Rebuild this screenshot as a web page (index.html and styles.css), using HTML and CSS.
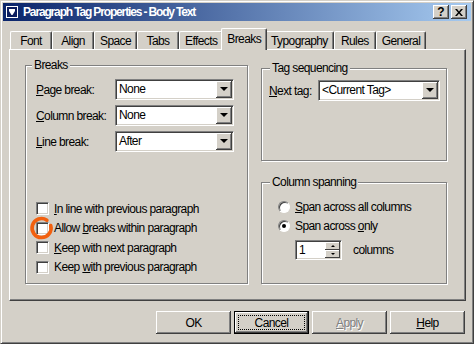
FILE: index.html
```html
<!DOCTYPE html>
<html lang="en">
<head>
    <meta charset="UTF-8">
    <meta name="viewport" content="width=device-width, initial-scale=1.0">
    <title>Paragraph Tag Properties - Body Text</title>
    <link rel="stylesheet" href="styles.css">
</head>
<body>
    <div class="window">
        <div class="titlebar">
            <svg class="app-icon" width="12" height="12" viewBox="0 0 12 12">
                <rect x="0.5" y="0.5" width="11" height="11" fill="#0c1d5e" stroke="#fff"/>
                <polygon points="3,3 9,3 9,5 6.5,9 5.5,9 3,5" fill="#fff"/>
            </svg>
            <span class="title">Paragraph Tag Properties - Body Text</span>
            <div class="caption-btns">
                <span class="cap-btn">?</span>
                <span class="cap-btn">
                    <svg width="8" height="7" viewBox="0 0 8 7">
                        <path d="M0 0h2l2 2.5L6 0h2L5 3.5 8 7H6L4 4.5 2 7H0l3-3.5z" fill="#000"/>
                    </svg>
                </span>
            </div>
        </div>

        <div class="dialog">
            <div class="tabs">
                <div class="tab">Font</div>
                <div class="tab">Align</div>
                <div class="tab">Space</div>
                <div class="tab">Tabs</div>
                <div class="tab">Effects</div>
                <div class="tab active">Breaks</div>
                <div class="tab">Typography</div>
                <div class="tab">Rules</div>
                <div class="tab">General</div>
            </div>

            <div class="panel">
                <fieldset class="group breaks">
                    <legend>Breaks</legend>
                    <div class="field-row">
                        <label><u>P</u>age break:</label>
                        <div class="select"><span class="value">None</span><span class="drop-btn"></span></div>
                    </div>
                    <div class="field-row">
                        <label><u>C</u>olumn break:</label>
                        <div class="select"><span class="value">None</span><span class="drop-btn"></span></div>
                    </div>
                    <div class="field-row">
                        <label><u>L</u>ine break:</label>
                        <div class="select"><span class="value">After</span><span class="drop-btn"></span></div>
                    </div>

                    <div class="checks">
                        <div class="check"><span class="box"></span><span><u>I</u>n line with previous paragraph</span></div>
                        <div class="check"><span class="box"></span><span>Allow <u>b</u>reaks within paragraph</span></div>
                        <div class="check"><span class="box"></span><span><u>K</u>eep with next paragraph</span></div>
                        <div class="check"><span class="box"></span><span>Keep <u>w</u>ith previous paragraph</span></div>
                    </div>
                </fieldset>

                <div class="right-col">
                    <fieldset class="group tagseq">
                        <legend>Tag sequencing</legend>
                        <div class="field-row">
                            <label class="short"><u>N</u>ext tag:</label>
                            <div class="select wide"><span class="value">&lt;Current Tag&gt;</span><span class="drop-btn"></span></div>
                        </div>
                    </fieldset>

                    <fieldset class="group spanning">
                        <legend>Column spanning</legend>
                        <div class="radio-row"><span class="radio"></span><span><u>S</u>pan across all columns</span></div>
                        <div class="radio-row"><span class="radio checked"></span><span>Span across <u>o</u>nly</span></div>
                        <div class="spin-row">
                            <div class="spin">
                                <span class="spin-val">1</span>
                                <span class="spin-btns">
                                    <span class="spin-btn up"></span>
                                    <span class="spin-btn down"></span>
                                </span>
                            </div>
                            <span class="spin-label">columns</span>
                        </div>
                    </fieldset>
                </div>
            </div>

            <div class="buttons">
                <div class="btn">OK</div>
                <div class="btn default"><span class="focus">Cancel</span></div>
                <div class="btn disabled"><span><u>A</u>pply</span></div>
                <div class="btn"><span><u>H</u>elp</span></div>
            </div>
        </div>

        <!-- hand drawn marker around the second checkbox -->
        <svg class="marker" width="28" height="28" viewBox="0 0 28 28">
            <path d="M22.7 11.5 A9.5 9.5 0 1 1 18.9 6.2" fill="none" stroke="#f2600f" stroke-width="3.6" stroke-linecap="round"/>
        </svg>
    </div>
</body>
</html>
```

FILE: styles.css
```css
body {
    margin: 0;
    font-family: "Liberation Sans", Arial, sans-serif;
    font-size: 12px;
    letter-spacing: -0.6px;
    color: #000;
}
u { text-underline-offset: 1px; }

.window {
    position: relative;
    width: 474px;
    height: 344px;
    box-sizing: border-box;
    background: #d4d0c8;
    border: 1px solid;
    border-color: #d4d0c8 #404040 #404040 #d4d0c8;
    box-shadow: inset 1px 1px #fff, inset -1px -1px #808080;
    padding: 2px;
}

/* title bar */
.titlebar {
    height: 18px;
    display: flex;
    align-items: center;
    padding-left: 3px;
    background: linear-gradient(to right, #0a246a, #a6caf0);
}
.app-icon { margin-right: 5px; }
.title {
    color: #fff;
    font-weight: bold;
    font-size: 12px;
    letter-spacing: -1.15px;
    flex: 1;
}
.caption-btns {
    display: flex;
    gap: 2px;
    margin-right: 4px;
}
.cap-btn {
    width: 16px;
    height: 14px;
    box-sizing: border-box;
    background: #d4d0c8;
    box-shadow: inset -1px -1px #404040, inset 1px 1px #fff, inset -2px -2px #808080;
    display: flex;
    align-items: center;
    justify-content: center;
    font-weight: bold;
    font-size: 12px;
    letter-spacing: 0;
    line-height: 1;
}

/* dialog body */
.dialog { padding: 7px 5px 0 6px; }

.tabs {
    display: flex;
    align-items: flex-end;
    height: 21px;
    padding-left: 1px;
}
.tab {
    height: 18px;
    min-width: 42px;
    box-sizing: border-box;
    padding: 0 5px;
    display: flex;
    align-items: center;
    justify-content: center;
    border: 1px solid #fff;
    border-right-color: #404040;
    border-bottom: none;
    border-radius: 2px 2px 0 0;
    box-shadow: inset -1px 0 #808080;
}
.tab.active {
    height: 22px;
    margin: 0 -2px -1px;
    padding-bottom: 2px;
    position: relative;
    z-index: 1;
    background: #d4d0c8;
}

.panel {
    height: 252px;
    box-sizing: border-box;
    border: 1px solid;
    border-color: #fff #404040 #404040 #fff;
    box-shadow: inset -1px -1px #808080;
    padding: 8px 18px 16px 15px;
    display: grid;
    grid-template-columns: 223px 186px;
    column-gap: 13px;
}

/* group boxes */
.group {
    margin: 0;
    padding: 0;
    min-width: 0;
    border: 1px solid #808080;
    box-shadow: inset 1px 1px #fff, 1px 1px #fff;
    box-sizing: border-box;
}
.group legend {
    padding: 0 2px;
    line-height: 14px;
    background: #d4d0c8;
}

.breaks {
    display: flex;
    flex-direction: column;
    padding: 7px 13px 6px 10px;
}
.breaks legend { margin-left: -4px; }

.right-col {
    display: flex;
    flex-direction: column;
}
.tagseq {
    margin-top: 3px;
    height: 100px;
    padding: 5px 6px 0 7px;
}
.tagseq legend { margin-left: 1px; }

.spanning {
    margin-top: auto;
    height: 109px;
    padding: 8px 6px 0 16px;
}
.spanning legend { margin-left: -8px; }

.field-row {
    display: flex;
    align-items: center;
    height: 21px;
    margin-bottom: 5px;
}
.field-row label { width: 79px; }
.field-row label.short { width: 49px; }

.select {
    display: flex;
    width: 119px;
    height: 21px;
    box-sizing: border-box;
    padding: 1px;
    background: #fff;
    border: 1px solid;
    border-color: #808080 #fff #fff #808080;
    box-shadow: inset 1px 1px #404040, inset -1px -1px #d4d0c8;
}
.select.wide { width: 122px; }
.select .value {
    flex: 1;
    padding-left: 2px;
    line-height: 17px;
}
.drop-btn {
    width: 16px;
    height: 17px;
    box-sizing: border-box;
    background: #d4d0c8;
    box-shadow: inset -1px -1px #404040, inset 1px 1px #fff, inset -2px -2px #808080;
    display: flex;
    align-items: center;
    justify-content: center;
}
.drop-btn::after {
    content: "";
    border-left: 4px solid transparent;
    border-right: 4px solid transparent;
    border-top: 4px solid #000;
    margin: 0 1px 1px 0;
}

.checks { margin-top: auto; }
.check {
    display: flex;
    align-items: center;
    height: 19.5px;
}
.box {
    width: 13px;
    height: 13px;
    box-sizing: border-box;
    margin-right: 5px;
    background: #fff;
    border: 1px solid;
    border-color: #808080 #fff #fff #808080;
    box-shadow: inset 1px 1px #404040, inset -1px -1px #d4d0c8;
}

.radio-row {
    display: flex;
    align-items: center;
    height: 19px;
}
.radio {
    position: relative;
    width: 12px;
    height: 12px;
    box-sizing: border-box;
    margin-right: 5px;
    border-radius: 50%;
    background: #fff;
    border: 1px solid;
    border-color: #808080 #fff #fff #808080;
    box-shadow: inset 1px 1px #404040;
}
.radio.checked::after {
    content: "";
    position: absolute;
    left: 3px;
    top: 3px;
    width: 4px;
    height: 4px;
    border-radius: 50%;
    background: #000;
}

.spin-row {
    display: flex;
    align-items: center;
    margin: 5px 0 0 17px;
}
.spin {
    display: flex;
    width: 47px;
    height: 20px;
    box-sizing: border-box;
    padding: 1px;
    background: #fff;
    border: 1px solid;
    border-color: #808080 #fff #fff #808080;
    box-shadow: inset 1px 1px #404040, inset -1px -1px #d4d0c8;
}
.spin-val {
    flex: 1;
    padding-left: 2px;
    line-height: 16px;
}
.spin-btns {
    width: 15px;
    display: flex;
    flex-direction: column;
}
.spin-btn {
    flex: 1;
    background: #d4d0c8;
    box-shadow: inset -1px -1px #404040, inset 1px 1px #fff;
    display: flex;
    align-items: center;
    justify-content: center;
}
.spin-btn.up::after {
    content: "";
    border-left: 2px solid transparent;
    border-right: 2px solid transparent;
    border-bottom: 2px solid #000;
}
.spin-btn.down::after {
    content: "";
    border-left: 2px solid transparent;
    border-right: 2px solid transparent;
    border-top: 2px solid #000;
}
.spin-label { margin-left: 11px; }

/* bottom buttons */
.buttons {
    display: flex;
    justify-content: flex-end;
    gap: 3px;
    margin: 10px 1px 0 0;
}
.btn {
    width: 75px;
    height: 23px;
    box-sizing: border-box;
    background: #d4d0c8;
    box-shadow: inset -1px -1px #404040, inset 1px 1px #fff, inset -2px -2px #808080;
    display: flex;
    align-items: center;
    justify-content: center;
}
.btn.default {
    border: 1px solid #000;
    padding: 3px;
}
.btn .focus {
    flex: 1;
    align-self: stretch;
    display: flex;
    align-items: center;
    justify-content: center;
    border: 1px dotted #000;
}
.btn.disabled {
    color: #808080;
    text-shadow: 1px 1px #fff;
}

.marker {
    position: absolute;
    left: 27px;
    top: 213px;
}
```
